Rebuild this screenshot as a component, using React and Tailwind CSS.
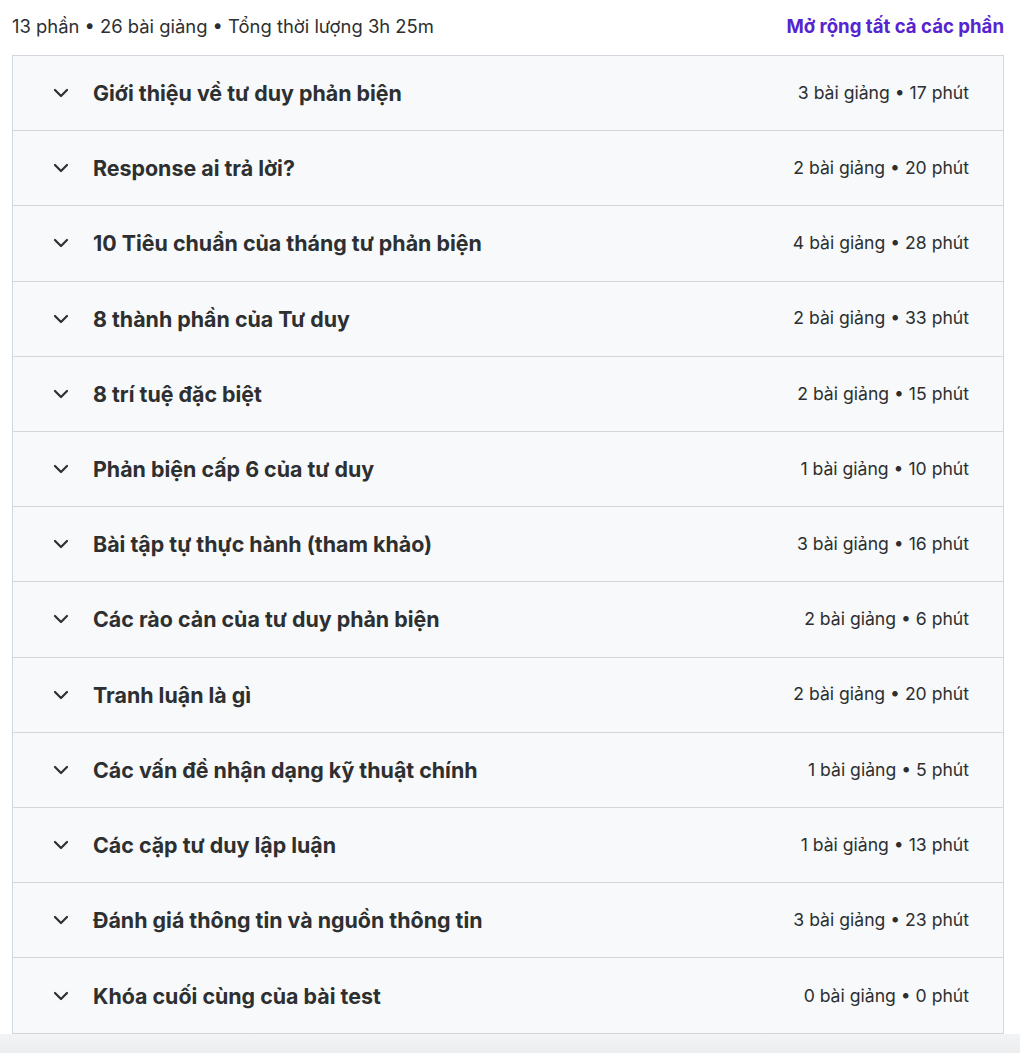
import { ChevronDown } from 'lucide-react';

const sections = [
  ['Giới thiệu về tư duy phản biện', '3 bài giảng • 17 phút'],
  ['Response ai trả lời?', '2 bài giảng • 20 phút'],
  ['10 Tiêu chuẩn của tháng tư phản biện', '4 bài giảng • 28 phút'],
  ['8 thành phần của Tư duy', '2 bài giảng • 33 phút'],
  ['8 trí tuệ đặc biệt', '2 bài giảng • 15 phút'],
  ['Phản biện cấp 6 của tư duy', '1 bài giảng • 10 phút'],
  ['Bài tập tự thực hành (tham khảo)', '3 bài giảng • 16 phút'],
  ['Các rào cản của tư duy phản biện', '2 bài giảng • 6 phút'],
  ['Tranh luận là gì', '2 bài giảng • 20 phút'],
  ['Các vấn đề nhận dạng kỹ thuật chính', '1 bài giảng • 5 phút'],
  ['Các cặp tư duy lập luận', '1 bài giảng • 13 phút'],
  ['Đánh giá thông tin và nguồn thông tin', '3 bài giảng • 23 phút'],
  ['Khóa cuối cùng của bài test', '0 bài giảng • 0 phút'],
];

export default function App() {
  return (
    <div className="w-[1020px] h-[1053px] overflow-hidden bg-white text-[#2d2f31] font-['Inter','Noto_Sans',sans-serif]">
      <div className="flex items-center justify-between pl-3 pr-4 h-[55px] pb-[2px]">
        <span className="text-[18.4px]">13 phần • 26 bài giảng • Tổng thời lượng 3h 25m</span>
        <button className="text-[18.6px] font-bold text-[#5624d0]">Mở rộng tất cả các phần</button>
      </div>

      <div className="ml-3 mr-4 border border-[#d1d7dc]">
        {sections.map(([title, meta], i) => (
          <div key={title}
            className={`flex items-center justify-between h-[75.2px] bg-[#f7f9fa] pl-[36px] pr-[34px] ${i < sections.length - 1 ? 'border-b border-[#d1d7dc]' : ''}`}>
            <div className="flex items-center gap-[20px]">
              <ChevronDown className="w-6 h-6" strokeWidth={2.2} />
              <span className="text-[21.4px] font-bold">{title}</span>
            </div>
            <span className="text-[17.6px]">{meta}</span>
          </div>
        ))}
      </div>
      <div className="h-[22px] bg-gradient-to-b from-[#f3f4f6] to-[#ebecee]" />
    </div>
  );
}
